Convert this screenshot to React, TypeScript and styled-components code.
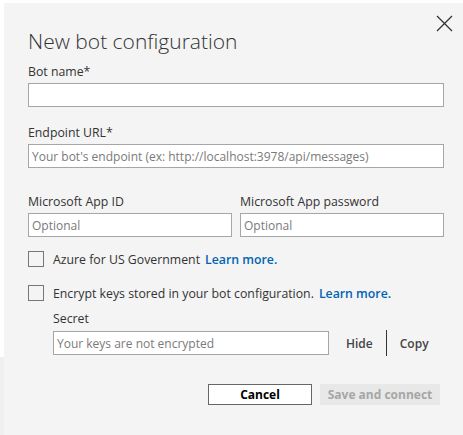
import styled, { createGlobalStyle } from "styled-components";

const GlobalStyle = createGlobalStyle`
  html, body {
    margin: 0;
    padding: 0;
    background: #ffffff;
    font-family: "Open Sans", "Noto Sans", sans-serif;
  }
  * { box-sizing: border-box; }
`;

const Page = styled.div`
  width: 463px;
  height: 435px;
  overflow: hidden;
  display: flex;
  background: #ffffff;
`;

const Gutter = styled.div`
  width: 4px;
  flex-shrink: 0;
  display: flex;
  flex-direction: column;
  padding-top: 357px;
`;

const GutterShade = styled.div`
  flex: 1;
  background: #f0f0f0;
`;

const Dialog = styled.div`
  position: relative;
  flex: 1;
  margin-top: 3px;
  background: #f4f4f4;
  padding: 24px 19px 0 24px;
  color: #333333;
`;

const Close = styled.button`
  position: absolute;
  top: 9px;
  right: 8px;
  width: 22px;
  height: 22px;
  padding: 0;
  border: none;
  background: transparent;
  display: flex;
  align-items: center;
  justify-content: center;
`;

const Title = styled.h2`
  margin: 0 0 9px;
  font-size: 21px;
  font-weight: 300;
  line-height: 28px;
  color: #333333;
`;

const Field = styled.div<{ $gap?: number }>`
  display: flex;
  flex-direction: column;
  margin-bottom: ${(p) => p.$gap ?? 0}px;
`;

const Label = styled.label`
  font-size: 12.3px;
  line-height: 16px;
  margin-bottom: 3px;
  color: #333333;
`;

const Input = styled.input`
  height: 24px;
  width: 100%;
  border: 1px solid #a6a6a6;
  background: #ffffff;
  padding: 0 3px;
  font-family: inherit;
  font-size: 12px;
  color: #333333;
  outline: none;
  &::placeholder {
    color: #7a7a7a;
  }
`;

const Columns = styled.div`
  display: grid;
  grid-template-columns: 1fr 1fr;
  column-gap: 8px;
  margin-bottom: 14px;
`;

const CheckRow = styled.div<{ $gap: number }>`
  display: flex;
  align-items: center;
  height: 16px;
  margin-bottom: ${(p) => p.$gap}px;
  font-size: 12.3px;
`;

const Box = styled.span`
  width: 16px;
  height: 16px;
  border: 1px solid #777777;
  background: transparent;
  margin-right: 9px;
  flex-shrink: 0;
`;

const Link = styled.a`
  color: #0063b1;
  font-weight: 600;
  margin-left: 5px;
  text-decoration: none;
`;

const SecretBlock = styled.div`
  padding-left: 25px;
  margin-bottom: 28px;
`;

const SecretRow = styled.div`
  display: flex;
  align-items: center;
`;

const SecretInput = styled(Input)`
  width: 276px;
`;

const TextButton = styled.button<{ $lead?: number }>`
  border: none;
  background: transparent;
  font-family: inherit;
  font-size: 12px;
  font-weight: 600;
  color: #444444;
  padding: 0;
  margin-left: ${(p) => p.$lead ?? 0}px;
`;

const Divider = styled.span`
  width: 1px;
  height: 26px;
  background: #333333;
  margin: 0 13px;
`;

const Actions = styled.div`
  display: flex;
  justify-content: flex-end;
  gap: 8px;
  padding-right: 4px;
`;

const Button = styled.button<{ $disabled?: boolean; $width: number }>`
  width: ${(p) => p.$width}px;
  height: 21px;
  font-family: inherit;
  font-size: 12px;
  font-weight: 700;
  border: 1px solid ${(p) => (p.$disabled ? "#e8e8e8" : "#666666")};
  background: ${(p) => (p.$disabled ? "#e8e8e8" : "#ffffff")};
  color: ${(p) => (p.$disabled ? "#a6a6a6" : "#000000")};
  padding: 0;
`;

export default function App() {
  return (
    <>
      <GlobalStyle />
      <Page>
        <Gutter>
          <GutterShade />
        </Gutter>
        <Dialog>
          <Close aria-label="Close">
            <svg width="17" height="17" viewBox="0 0 17 17">
              <path d="M1 1L16 16M16 1L1 16" stroke="#333" strokeWidth="1.3" />
            </svg>
          </Close>
          <Title>New bot configuration</Title>
          <Field $gap={18}>
            <Label>Bot name*</Label>
            <Input />
          </Field>
          <Field $gap={26}>
            <Label>Endpoint URL*</Label>
            <Input placeholder="Your bot's endpoint (ex: http://localhost:3978/api/messages)" />
          </Field>
          <Columns>
            <Field>
              <Label>Microsoft App ID</Label>
              <Input placeholder="Optional" />
            </Field>
            <Field>
              <Label>Microsoft App password</Label>
              <Input placeholder="Optional" />
            </Field>
          </Columns>
          <CheckRow $gap={18}>
            <Box />
            Azure for US Government
            <Link href="#">Learn more.</Link>
          </CheckRow>
          <CheckRow $gap={10}>
            <Box />
            Encrypt keys stored in your bot configuration.
            <Link href="#">Learn more.</Link>
          </CheckRow>
          <SecretBlock>
            <Field>
              <Label>Secret</Label>
              <SecretRow>
                <SecretInput placeholder="Your keys are not encrypted" />
                <TextButton $lead={17}>Hide</TextButton>
                <Divider />
                <TextButton>Copy</TextButton>
              </SecretRow>
            </Field>
          </SecretBlock>
          <Actions>
            <Button $width={104}>Cancel</Button>
            <Button $disabled $width={120}>
              Save and connect
            </Button>
          </Actions>
        </Dialog>
      </Page>
    </>
  );
}
